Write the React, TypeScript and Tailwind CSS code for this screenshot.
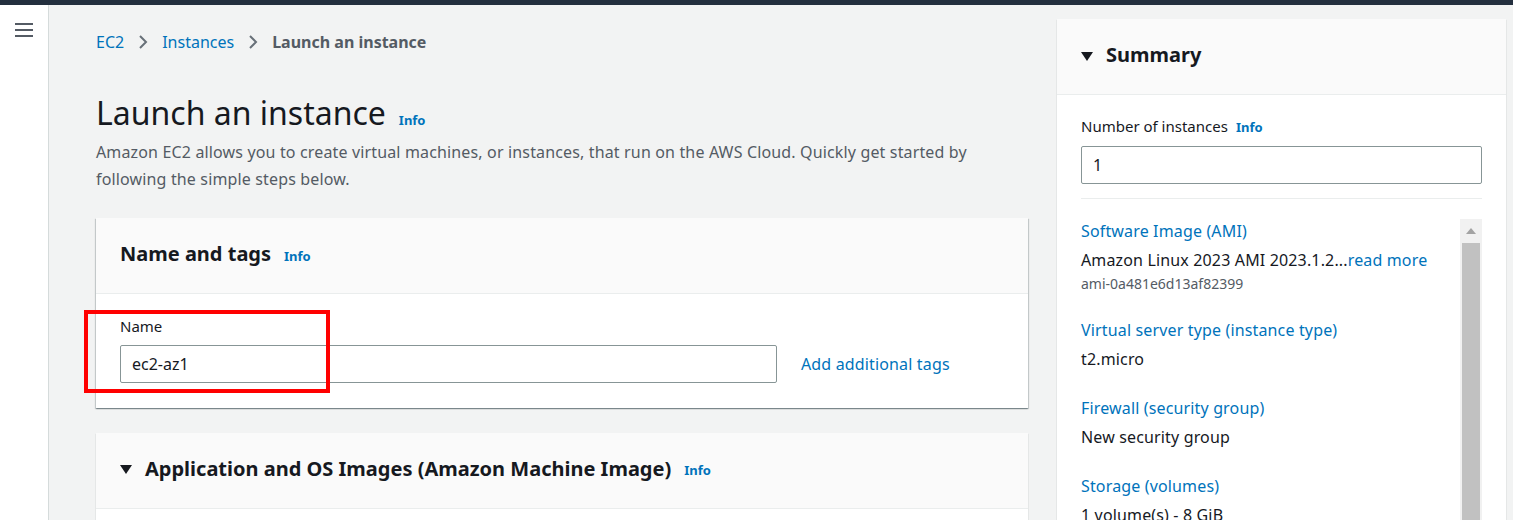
import React from "react";

const font = { fontFamily: "'Noto Sans', 'Open Sans', Arial, sans-serif" };

function Info({ className = "" }: { className?: string }) {
  return <span className={`text-[13px] font-bold text-[#0073bb] ${className}`}>Info</span>;
}

function Caret() {
  return (
    <svg width="12" height="10" viewBox="0 0 12 10" className="shrink-0">
      <path d="M0 0h12L6 9z" fill="#16191f" />
    </svg>
  );
}

function Chevron() {
  return (
    <svg width="12" height="16" viewBox="0 0 12 16" className="mx-[13px]">
      <path d="M3 2l6 6-6 6" fill="none" stroke="#687078" strokeWidth="2" />
    </svg>
  );
}

function NameCard() {
  return (
    <section className="relative bg-white shadow-[0_1px_1px_0_rgba(0,28,36,0.3),1px_1px_1px_0_rgba(0,28,36,0.15),-1px_1px_1px_0_rgba(0,28,36,0.15)]">
      <div className="flex h-[76px] items-center gap-[13px] border-b border-[#eaeded] bg-[#fafafa] px-6">
        <h2 className="mb-[3px] text-[20px] font-bold text-[#16191f]">Name and tags</h2>
        <Info className="mt-[2px]" />
      </div>
      <div className="px-6 pt-[21px] pb-[25px]">
        <div className="text-[15px] text-[#16191f]">Name</div>
        <div className="mt-[7px] flex items-center">
          <div className="flex h-[38px] w-[657px] items-center rounded-[2px] border border-[#879596] px-[11px] text-[16px] text-[#16191f]">
            ec2-az1
          </div>
          <a className="ml-[24px] text-[16px] tracking-[0.15px] text-[#0073bb]">Add additional tags</a>
        </div>
      </div>
      <div className="absolute left-[-12px] top-[92px] h-[83px] w-[246px] border-4 border-[#ff0000]" />
    </section>
  );
}

function AmiCard() {
  return (
    <section className="mt-[25px] bg-white shadow-[0_1px_1px_0_rgba(0,28,36,0.3)]">
      <div className="flex h-[76px] items-center gap-[13px] border-b border-[#eaeded] bg-[#fafafa] px-6">
        <Caret />
        <h2 className="mb-[3px] text-[20px] font-bold text-[#16191f]">Application and OS Images (Amazon Machine Image)</h2>
        <Info className="mt-[2px]" />
      </div>
      <div className="h-[100px]" />
    </section>
  );
}

function SummaryItem({ title, value, sub }: { title: string; value: React.ReactNode; sub?: string }) {
  return (
    <div className={sub ? "mb-[24px]" : "mb-[21px]"}>
      <div className="text-[16px] leading-[26px] tracking-[0.15px] text-[#0073bb]">{title}</div>
      <div className="mt-[1px] text-[16px] leading-[30px] tracking-[0.15px] text-[#16191f]">{value}</div>
      {sub && <div className="text-[14px] leading-[18px] text-[#545b64]">{sub}</div>}
    </div>
  );
}

function Summary() {
  return (
    <aside className="mt-[14px] h-[600px] w-[449px] shrink-0 bg-white shadow-[0_1px_1px_0_rgba(0,28,36,0.3)]">
      <div className="flex h-[76px] items-center gap-[13px] border-b border-[#eaeded] bg-[#fafafa] px-6">
        <Caret />
        <h2 className="mb-[3px] text-[20px] font-bold text-[#16191f]">Summary</h2>
      </div>
      <div className="px-6 pt-[20px]">
        <div className="flex items-baseline gap-[8px]">
          <span className="text-[15px] text-[#16191f]">Number of instances</span>
          <Info />
        </div>
        <div className="mt-[8px] flex h-[38px] items-center rounded-[2px] border border-[#879596] px-[11px] text-[16px] text-[#16191f]">
          1
        </div>
        <div className="mt-[14px] border-t border-[#eaeded]" />
        <div className="mt-[20px] flex">
          <div className="-mt-[1px] flex-1">
            <SummaryItem
              title="Software Image (AMI)"
              value={
                <>
                  Amazon Linux 2023 AMI 2023.1.2...<span className="text-[#0073bb]">read more</span>
                </>
              }
              sub="ami-0a481e6d13af82399"
            />
            <SummaryItem title="Virtual server type (instance type)" value="t2.micro" />
            <SummaryItem title="Firewall (security group)" value="New security group" />
            <SummaryItem title="Storage (volumes)" value="1 volume(s) - 8 GiB" />
          </div>
          <div className="flex w-[22px] shrink-0 flex-col bg-[#f1f1f1]">
            <div className="flex h-[24px] items-center justify-center">
              <svg width="10" height="6" viewBox="0 0 10 6">
                <path d="M0 6L5 0l5 6z" fill="#a3a3a3" />
              </svg>
            </div>
            <div className="mx-[2px] h-[400px] bg-[#c1c1c1]" />
          </div>
        </div>
      </div>
    </aside>
  );
}

export default function App() {
  return (
    <div style={font} className="h-[520px] overflow-hidden bg-[#f2f3f3]">
      <div className="h-[5px] bg-[#232f3e]" />
      <div className="flex h-[515px]">
        <div className="w-[49px] shrink-0 border-r border-[#d5dbdb] bg-white">
          <svg width="18" height="14" viewBox="0 0 18 14" className="ml-[15px] mt-[18px]">
            <path d="M0 1h18M0 7h18M0 13h18" stroke="#545b64" strokeWidth="2" />
          </svg>
        </div>
        <div className="flex flex-1 pl-[47px]">
          <div className="w-[932px] shrink-0">
            <nav className="mt-[25px] flex h-[24px] items-center text-[16px]">
              <a className="text-[#0073bb]">EC2</a>
              <Chevron />
              <a className="text-[#0073bb]">Instances</a>
              <Chevron />
              <span className="font-bold text-[#545b64]">Launch an instance</span>
            </nav>
            <div className="mt-[39px] flex items-baseline gap-[13px]">
              <h1 className="text-[32px] leading-[40px] text-[#16191f]">Launch an instance</h1>
              <Info />
            </div>
            <p className="mt-[6px] w-[900px] text-[16px] leading-[27px] tracking-[0.15px] text-[#545b64]">
              Amazon EC2 allows you to create virtual machines, or instances, that run on the AWS Cloud. Quickly get started by following the simple steps below.
            </p>
            <div className="mt-[25px]">
              <NameCard />
              <AmiCard />
            </div>
          </div>
          <div className="ml-[29px]">
            <Summary />
          </div>
        </div>
      </div>
    </div>
  );
}
